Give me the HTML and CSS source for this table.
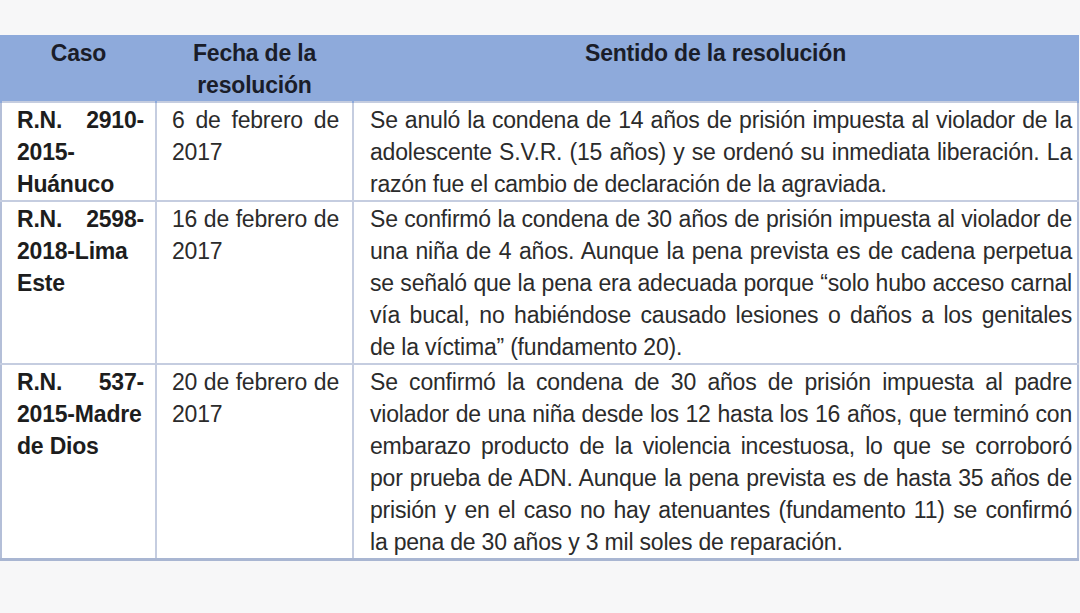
FILE: index.html
```html
<!DOCTYPE html>
<html lang="es">
<head>
<meta charset="utf-8">
<title>Casos</title>
<link rel="stylesheet" href="styles.css">
</head>
<body>
<main class="page">
  <table class="cases">
    <colgroup>
      <col class="c-case">
      <col class="c-date">
      <col class="c-sense">
    </colgroup>
    <thead>
      <tr>
        <th>Caso</th>
        <th>Fecha de la resolución</th>
        <th>Sentido de la resolución</th>
      </tr>
    </thead>
    <tbody>
      <tr>
        <td class="case">
          <span class="ln">R.N. 2910-</span>
          <span class="ln">2015-</span>
          <span class="ln">Huánuco</span>
        </td>
        <td class="date">
          <span class="ln">6 de febrero de</span>
          <span class="ln">2017</span>
        </td>
        <td class="sense">
          <span class="ln">Se anuló la condena de 14 años de prisión impuesta al violador de la</span>
          <span class="ln">adolescente S.V.R. (15 años) y se ordenó su inmediata liberación. La</span>
          <span class="ln">razón fue el cambio de declaración de la agraviada.</span>
        </td>
      </tr>
      <tr>
        <td class="case">
          <span class="ln">R.N. 2598-</span>
          <span class="ln">2018-Lima</span>
          <span class="ln">Este</span>
        </td>
        <td class="date">
          <span class="ln">16 de febrero de</span>
          <span class="ln">2017</span>
        </td>
        <td class="sense">
          <span class="ln">Se confirmó la condena de 30 años de prisión impuesta al violador de</span>
          <span class="ln">una niña de 4 años. Aunque la pena prevista es de cadena perpetua</span>
          <span class="ln">se señaló que la pena era adecuada porque “solo hubo acceso carnal</span>
          <span class="ln">vía bucal, no habiéndose causado lesiones o daños a los genitales</span>
          <span class="ln">de la víctima” (fundamento 20).</span>
        </td>
      </tr>
      <tr>
        <td class="case">
          <span class="ln">R.N. 537-</span>
          <span class="ln">2015-Madre</span>
          <span class="ln">de Dios</span>
        </td>
        <td class="date">
          <span class="ln">20 de febrero de</span>
          <span class="ln">2017</span>
        </td>
        <td class="sense">
          <span class="ln">Se confirmó la condena de 30 años de prisión impuesta al padre</span>
          <span class="ln">violador de una niña desde los 12 hasta los 16 años, que terminó con</span>
          <span class="ln">embarazo producto de la violencia incestuosa, lo que se corroboró</span>
          <span class="ln">por prueba de ADN. Aunque la pena prevista es de hasta 35 años de</span>
          <span class="ln">prisión y en el caso no hay atenuantes (fundamento 11) se confirmó</span>
          <span class="ln">la pena de 30 años y 3 mil soles de reparación.</span>
        </td>
      </tr>
    </tbody>
  </table>
</main>
</body>
</html>
```

FILE: styles.css
```css
html, body {
  margin: 0;
  padding: 0;
  background: #f7f7f8;
}

.page {
  padding-top: 35px;
  width: 1080px;
  height: 613px;
  box-sizing: border-box;
}

.cases {
  border-collapse: collapse;
  table-layout: fixed;
  width: 1077px;
  font-family: "Liberation Sans", Arial, sans-serif;
  font-size: 23px;
  line-height: 32px;
  letter-spacing: -0.2px;
  background: #ffffff;
}

.c-case { width: 155px; }
.c-date { width: 197px; }
.c-sense { width: 725px; }

.cases th {
  background: #8eaadb;
  color: #1a1d29;
  font-weight: bold;
  text-align: center;
  vertical-align: top;
  padding: 2px 12px 0 12px;
  border-left: 2px solid #8eaadb;
  border-right: 2px solid #8eaadb;
}

.cases td {
  vertical-align: top;
  color: #2b2b2b;
  padding: 1px 11px 0 15px;
  border: 2px solid #c5cde0;
}

.cases td:first-child { border-left: 2px solid #b4bfd8; }
.cases td:last-child { border-right: 2px solid #b4bfd8; padding-left: 16px; padding-right: 5px; }
.cases tbody tr:last-child td { border-bottom: 3px solid #a9b6d2; }

.ln {
  display: block;
  text-align: justify;
  text-align-last: justify;
}

.ln:last-child {
  text-align-last: left;
}

.cases td.case {
  font-weight: bold;
  color: #1d1d1d;
}

.cases td.date {
  padding-right: 13px;
}
```
